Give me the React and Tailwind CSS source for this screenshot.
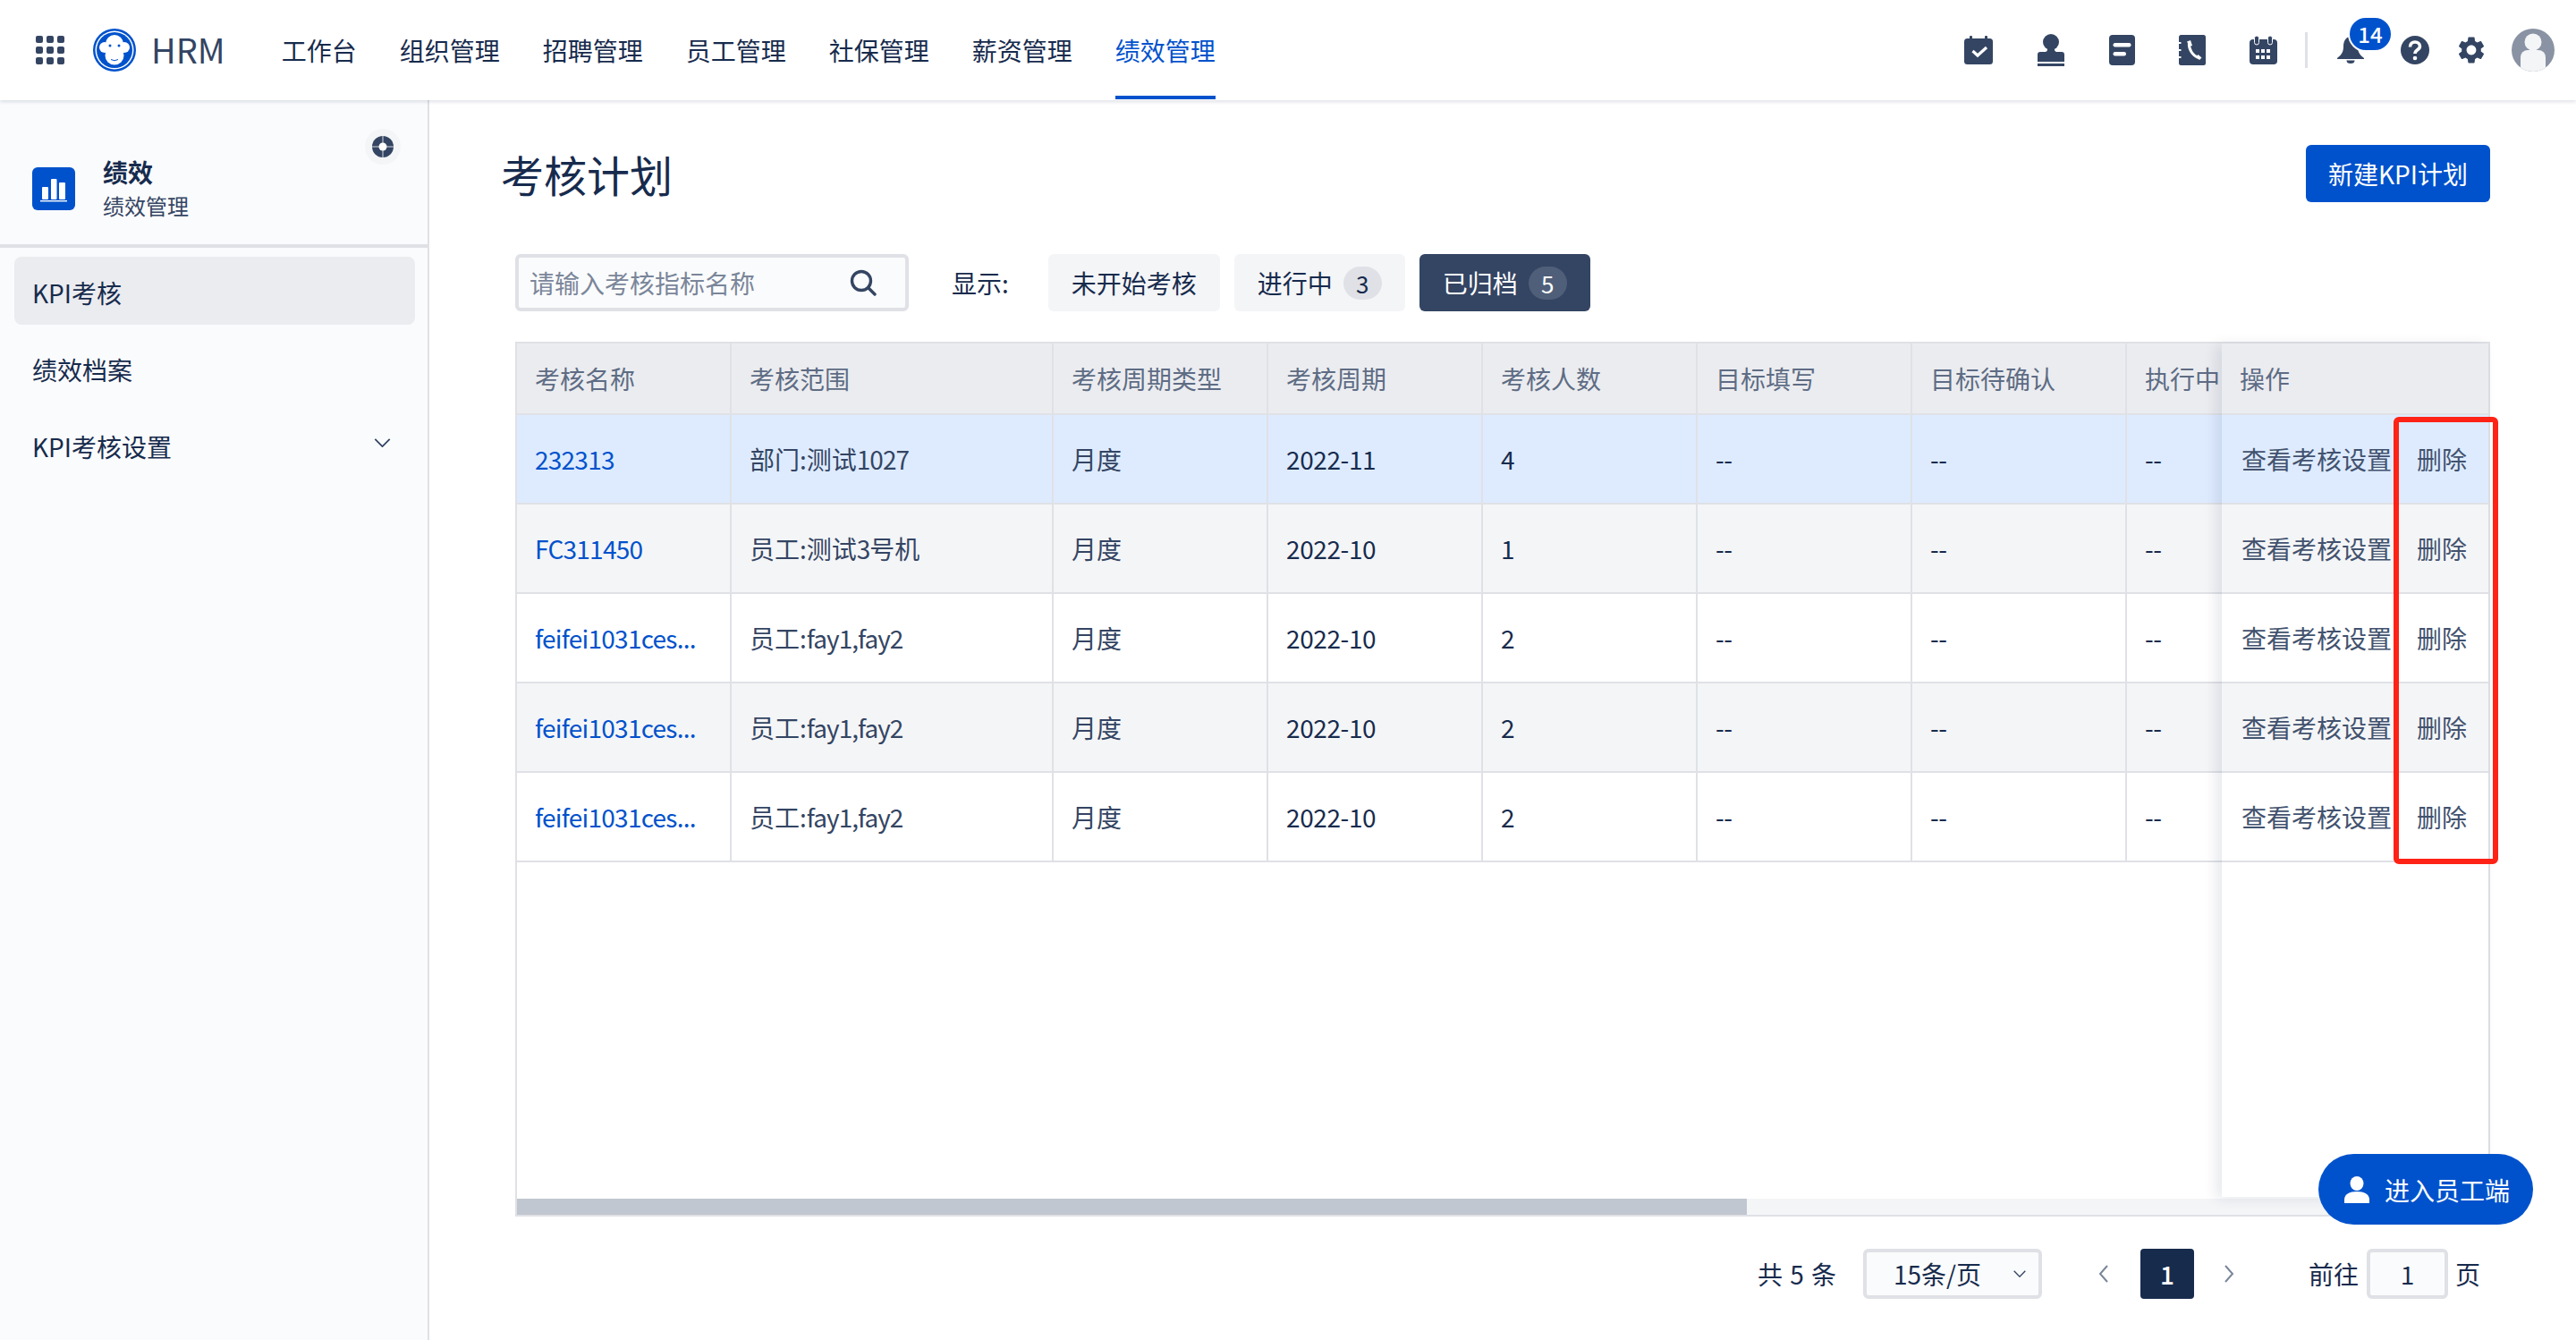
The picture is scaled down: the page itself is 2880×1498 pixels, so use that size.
import { MdSettings } from 'react-icons/md';

const navItems = ['工作台', '组织管理', '招聘管理', '员工管理', '社保管理', '薪资管理', '绩效管理'];

const columns = [
  { key: 'name', title: '考核名称', width: 'w-[240px]' },
  { key: 'scope', title: '考核范围', width: 'w-[360px]' },
  { key: 'type', title: '考核周期类型', width: 'w-[240px]' },
  { key: 'period', title: '考核周期', width: 'w-[240px]' },
  { key: 'count', title: '考核人数', width: 'w-[240px]' },
  { key: 'fill', title: '目标填写', width: 'w-[240px]' },
  { key: 'confirm', title: '目标待确认', width: 'w-[240px]' },
  { key: 'running', title: '执行中', width: 'w-[240px]' },
];

const rows = [
  { name: '232313', scope: '部门:测试1027', type: '月度', period: '2022-11', count: '4', bg: 'bg-[#deebff]' },
  { name: 'FC311450', scope: '员工:测试3号机', type: '月度', period: '2022-10', count: '1', bg: 'bg-[#f4f5f7]' },
  { name: 'feifei1031ces...', scope: '员工:fay1,fay2', type: '月度', period: '2022-10', count: '2', bg: 'bg-white' },
  { name: 'feifei1031ces...', scope: '员工:fay1,fay2', type: '月度', period: '2022-10', count: '2', bg: 'bg-[#f4f5f7]' },
  { name: 'feifei1031ces...', scope: '员工:fay1,fay2', type: '月度', period: '2022-10', count: '2', bg: 'bg-white' },
];

function GridIcon() {
  const dots = [0, 12, 24];
  return (
    <svg width="32" height="32" viewBox="0 0 32 32" fill="#344563">
      {dots.map((y) => dots.map((x) => <rect key={`${x}-${y}`} x={x} y={y} width="8" height="8" rx="2" />))}
    </svg>
  );
}

function Logo() {
  return (
    <svg width="48" height="48" viewBox="0 0 48 48">
      <circle cx="24" cy="24" r="24" fill="#0052cc" />
      <circle cx="24" cy="24" r="21.5" fill="#fff" />
      <circle cx="24" cy="24" r="20" fill="#0052cc" />
      <circle cx="13" cy="21" r="6" fill="#fff" />
      <circle cx="35" cy="21" r="6" fill="#fff" />
      <circle cx="24" cy="17" r="10" fill="#fff" />
      <circle cx="24" cy="30" r="10.5" fill="#fff" />
      <circle cx="19" cy="19" r="1.5" fill="#0052cc" />
      <circle cx="29" cy="19" r="1.5" fill="#0052cc" />
      <path d="M20 34.5 Q24 37 28 34.5" stroke="#0052cc" strokeWidth="1" fill="none" />
    </svg>
  );
}

function CheckCalendarIcon() {
  return (
    <svg width="32" height="32" viewBox="0 0 32 32" fill="#344563">
      <rect x="6" y="0" width="3" height="6" rx="1" />
      <rect x="23" y="0" width="3" height="6" rx="1" />
      <rect x="0" y="3" width="32" height="29" rx="3.5" />
      <path d="M9.5 17 L15 22 L25 13" stroke="#fff" strokeWidth="3.2" fill="none" />
    </svg>
  );
}

function StampIcon() {
  return (
    <svg width="32" height="36" viewBox="0 0 32 36" fill="#344563">
      <circle cx="16" cy="9" r="9" />
      <path d="M1 31 V23 Q1 20 4 20 H10 Q13 19 12 14 H20 Q19 19 22 20 H28 Q31 20 31 23 V31 Z" />
      <rect x="1" y="33" width="30" height="3" />
    </svg>
  );
}

function FormIcon() {
  return (
    <svg width="29" height="34" viewBox="0 0 29 34">
      <rect width="29" height="34" rx="4" fill="#344563" />
      <rect x="4.5" y="9" width="20" height="4.5" rx="2.2" fill="#fff" />
      <rect x="4.5" y="19" width="14.5" height="4.5" rx="2.2" fill="#fff" />
    </svg>
  );
}

function PhoneBookIcon() {
  return (
    <svg width="30" height="34" viewBox="0 0 30 34">
      <rect width="30" height="34" rx="2.5" fill="#344563" />
      <rect x="0" y="8" width="2.5" height="2" fill="#fff" />
      <rect x="0" y="16" width="2.5" height="2" fill="#fff" />
      <rect x="0" y="24" width="2.5" height="2" fill="#fff" />
      <path d="M11.5 8.5 C10.5 15 15 23.5 22.5 25.5" stroke="#fff" strokeWidth="3" fill="none" />
      <path d="M9 7.5 L13 6 L15 12 L12 13 Z M19 25 L21.5 22 L25.5 25.5 L23 28 Z" fill="#fff" />
    </svg>
  );
}

function CalendarIcon() {
  const xs = [7, 13, 19];
  const ys = [15, 22];
  return (
    <svg width="31" height="32" viewBox="0 0 31 32">
      <rect x="0" y="4" width="31" height="28" rx="4" fill="#344563" />
      <rect x="5.5" y="0" width="5" height="10" rx="2.5" fill="#344563" stroke="#fff" strokeWidth="1" />
      <rect x="20.5" y="0" width="5" height="10" rx="2.5" fill="#344563" stroke="#fff" strokeWidth="1" />
      {ys.map((y) => xs.map((x) => <rect key={`${x}-${y}`} x={x} y={y} width="4" height="4" fill="#fff" />))}
    </svg>
  );
}

function BellIcon() {
  return (
    <svg width="30" height="30" viewBox="0 0 30 30" fill="#344563">
      <path d="M15 0 C9 0 7 6 7 11 C7 17 5 20 0 24 V25 H30 V24 C25 20 23 17 23 11 C23 6 21 0 15 0 Z" />
      <path d="M10.5 26.5 H19.5 A4.5 3.5 0 0 1 10.5 26.5 Z" />
    </svg>
  );
}

function HelpIcon() {
  return (
    <svg width="32" height="32" viewBox="0 0 32 32">
      <circle cx="16" cy="16" r="16" fill="#344563" />
      <path d="M10.5 12.5 C10.5 9 13 7 16 7 C19 7 21.5 9 21.5 12 C21.5 15.5 16 15.5 16 20" stroke="#fff" strokeWidth="3.6" fill="none" />
      <circle cx="16" cy="25" r="2.3" fill="#fff" />
    </svg>
  );
}

function AvatarIcon() {
  return (
    <svg width="48" height="48" viewBox="0 0 48 48">
      <clipPath id="avatar-clip">
        <circle cx="24" cy="24" r="24" />
      </clipPath>
      <circle cx="24" cy="24" r="24" fill="#8993a4" />
      <circle cx="24" cy="15" r="9.5" fill="#f4f5f7" />
      <rect x="10" y="24" width="28" height="30" rx="8" fill="#f4f5f7" clipPath="url(#avatar-clip)" />
    </svg>
  );
}

function SearchIcon() {
  return (
    <svg width="30" height="30" viewBox="0 0 30 30" fill="none" stroke="#344563" strokeWidth="3.4">
      <circle cx="13" cy="13" r="10.5" />
      <path d="M21 21 L28 28" strokeLinecap="round" />
    </svg>
  );
}

function Chevron({ className }) {
  return (
    <svg className={className} viewBox="0 0 20 11" fill="none" stroke="currentColor" strokeWidth="2">
      <path d="M1 1 L10 10 L19 1" />
    </svg>
  );
}

// latin runs sit a little tighter than the CJK around them
function Tight({ text, className }) {
  return text.split(/([A-Za-z0-9,.\-]+)/).map((part, i) =>
    i % 2 === 1 ? (
      <span key={i} className={className}>
        {part}
      </span>
    ) : (
      part
    )
  );
}

function Sidebar() {
  return (
    <aside className="w-[480px] shrink-0 bg-[#fafbfc] border-r-2 border-[#dfe1e6]">
      <div className="relative h-[165px] border-b-4 border-[#dfe1e6] flex items-center pl-9 pt-[37px]">
        <div className="w-12 h-12 rounded-md bg-[#0052cc] flex items-center justify-center">
          <svg width="30" height="30" viewBox="0 0 30 30" fill="#fff">
            <rect x="2" y="13" width="7" height="14" rx="1" />
            <rect x="12" y="4" width="6.5" height="23" rx="1" />
            <rect x="21" y="8" width="7" height="19" rx="1" />
            <rect x="0" y="28" width="30" height="1.4" />
          </svg>
        </div>
        <div className="ml-[31px]">
          <div className="text-[28px] leading-[38px] font-bold text-[#172b4d]">绩效</div>
          <div className="text-[24px] leading-[38px] text-[#344563]">绩效管理</div>
        </div>
        <div className="absolute left-[408px] top-[32px] w-10 h-10 rounded-full bg-[#f4f5f7] flex items-center justify-center">
          <svg width="24" height="24" viewBox="0 0 24 24">
            <circle cx="12" cy="12" r="12" fill="#344563" />
            <path d="M12 0 V24 M0 12 H24" stroke="#fff" strokeWidth="0.8" />
            <circle cx="12" cy="12" r="4.5" fill="#fff" />
          </svg>
        </div>
      </div>
      <nav className="pl-4 pr-3.5 pt-2.5 flex flex-col gap-2.5 text-[28px] text-[#172b4d]">
        <div className="h-[76px] pt-1 rounded-lg bg-[#ebecf0] flex items-center pl-[20px]">KPI考核</div>
        <div className="h-[76px] pt-1 rounded-lg flex items-center pl-[20px]">绩效档案</div>
        <div className="h-[76px] pt-1 rounded-lg flex items-center justify-between pl-[20px] pr-[27px]">
          KPI考核设置
          <Chevron className="w-[19px] h-[10px] mb-2 text-[#344563]" />
        </div>
      </nav>
    </aside>
  );
}

function TableRow({ row }) {
  return (
    <div className={`flex h-[100px] border-b-2 border-[#dfe1e6] ${row.bg}`}>
      {columns.map((col) => {
        const value = row[col.key] ?? '--';
        return (
          <div key={col.key} className={`${col.width} shrink-0 h-full flex items-center pl-5 border-r-2 border-[#dfe1e6]`}>
            {col.key === 'name' && <a className="text-[#0052cc] tracking-[-0.75px]">{value}</a>}
            {col.key === 'scope' && (
              <span className="text-[#344563]">
                <Tight text={value} className="tracking-[-1px]" />
              </span>
            )}
            {col.key === 'type' && <span className="text-[#344563]">{value}</span>}
            {col.key !== 'name' && col.key !== 'scope' && col.key !== 'type' && (
              <span className="text-[#172b4d] tracking-[-0.4px]">{value}</span>
            )}
          </div>
        );
      })}
    </div>
  );
}

function PlanTable() {
  return (
    <div className="relative mt-[34px] ml-4 w-[2208px] h-[978px] border-2 border-[#dfe1e6] flex flex-col text-[28px]">
      <div className="flex-1 overflow-hidden">
        <div className="flex h-[80px] bg-[#ebecf0] border-b-2 border-[#dfe1e6] text-[#5e6c84]">
          {columns.map((col) => (
            <div key={col.key} className={`${col.width} shrink-0 h-full flex items-center pl-5 border-r-2 border-[#dfe1e6] whitespace-nowrap`}>
              {col.title}
            </div>
          ))}
        </div>
        {rows.map((row, i) => (
          <TableRow key={i} row={row} />
        ))}
      </div>
      <div className="h-[18px] shrink-0 bg-[#f4f5f7]">
        <div className="h-full w-[1375px] bg-[#c1c7d0]" />
      </div>

      {/* fixed 操作 column */}
      <div className="absolute top-0 right-0 bottom-[20px] w-[298px] bg-white shadow-[-6px_2px_14px_rgba(9,30,66,0.1)]">
        <div className="h-[80px] bg-[#ebecf0] border-b-2 border-[#dfe1e6] flex items-center pl-5 text-[#5e6c84]">操作</div>
        {rows.map((row, i) => (
          <div key={i} className={`h-[100px] border-b-2 border-[#dfe1e6] flex items-center pl-[22px] text-[#42526e] ${row.bg}`}>
            <span>查看考核设置</span>
            <span className="ml-7">删除</span>
          </div>
        ))}
      </div>

      {/* red annotation */}
      <div className="absolute left-[2098px] top-[82px] w-[117px] h-[500px] border-[6px] border-[#ff2216] rounded-md" />
    </div>
  );
}

function Pagination() {
  return (
    <div className="mt-9 h-14 pr-[11px] flex items-center justify-end text-[28px] text-[#172b4d]">
      <span className="[word-spacing:2px]">共 5 条</span>
      <div className="ml-[30px] w-[200px] h-14 border-4 border-[#dfe1e6] rounded-md bg-[#fafbfc] flex items-center pl-[30px] pr-3.5">
        <span className="flex-1">15条/页</span>
        <Chevron className="w-[14px] h-[8px] text-[#344563]" />
      </div>
      <svg className="ml-[62px]" width="13" height="24" viewBox="0 0 13 24" fill="none" stroke="#7a869a" strokeWidth="2">
        <path d="M11 3 L3 12 L11 21" />
      </svg>
      <div className="ml-[35px] w-[60px] h-14 rounded bg-[#172b4d] text-white font-medium flex items-center justify-center">1</div>
      <svg className="ml-[33px]" width="13" height="24" viewBox="0 0 13 24" fill="none" stroke="#7a869a" strokeWidth="2">
        <path d="M2 3 L10 12 L2 21" />
      </svg>
      <span className="ml-[82px]">前往</span>
      <div className="ml-[9px] w-[91px] h-14 border-4 border-[#dfe1e6] rounded-md bg-[#fafbfc] flex items-center justify-center">1</div>
      <span className="ml-2">页</span>
    </div>
  );
}

export default function App() {
  return (
    <div className="relative h-[1498px] overflow-hidden bg-white flex flex-col font-['Noto_Sans_CJK_SC','Noto_Sans',sans-serif]">
      <header className="relative z-10 h-[112px] shrink-0 bg-white shadow-[0_2px_4px_rgba(9,30,66,0.13)] flex items-center pl-10 pr-6">
        <GridIcon />
        <div className="ml-[32px]">
          <Logo />
        </div>
        <span className="ml-[17px] mb-1 text-[38px] text-[#344563]">HRM</span>
        <nav className="ml-[63px] flex gap-12 text-[28px] text-[#172b4d] self-start">
          {navItems.map((item) => (
            <div
              key={item}
              className={
                item === '绩效管理'
                  ? 'h-[111px] pt-1 flex items-center border-b-4 border-[#0052cc] text-[#0052cc]'
                  : 'h-[111px] pt-1 flex items-center border-b-4 border-transparent'
              }
            >
              {item}
            </div>
          ))}
        </nav>
        <div className="ml-auto flex items-center">
          <div className="flex items-center gap-[49px]">
            <CheckCalendarIcon />
            <StampIcon />
            <FormIcon />
            <PhoneBookIcon />
            <CalendarIcon />
          </div>
          <div className="ml-[31px] w-[3px] h-10 bg-[#dfe1e6]" />
          <div className="relative ml-[33px]">
            <BellIcon />
            <span className="absolute left-[12px] top-[-23px] w-[50px] h-10 rounded-full bg-[#0052cc] border-2 border-white text-white text-[24px] font-medium flex items-center justify-center">
              14
            </span>
          </div>
          <div className="ml-[41px]">
            <HelpIcon />
          </div>
          <MdSettings className="ml-[29px] text-[#344563]" size={36} />
          <div className="ml-[27px]">
            <AvatarIcon />
          </div>
        </div>
      </header>

      <div className="flex flex-1 min-h-0">
        <Sidebar />
        <main className="flex-1 pl-20 pr-24 pt-[50px]">
          <div className="h-16 flex items-center justify-between">
            <h1 className="text-[48px] text-[#172b4d]">考核计划</h1>
            <button className="w-[206px] h-16 rounded-md bg-[#0052cc] text-white text-[28px]">新建KPI计划</button>
          </div>

          <div className="mt-[58px] ml-4 h-16 flex items-center text-[28px] text-[#172b4d]">
            <div className="w-[440px] h-16 border-4 border-[#dfe1e6] rounded-md bg-[#fafbfc] flex items-center justify-between pl-3 pr-8">
              <span className="text-[#7a869a]">请输入考核指标名称</span>
              <SearchIcon />
            </div>
            <span className="ml-12">显示:</span>
            <div className="ml-[44px] w-[192px] h-16 rounded-md bg-[#f4f5f7] flex items-center justify-center">未开始考核</div>
            <div className="ml-4 w-[191px] h-16 rounded-md bg-[#f4f5f7] flex items-center pl-[26px]">
              进行中
              <span className="ml-3 w-[43px] h-[37px] rounded-full bg-[#dfe1e6] text-[26px] flex items-center justify-center">3</span>
            </div>
            <div className="ml-4 w-[191px] h-16 rounded-md bg-[#344563] text-white flex items-center pl-[26px]">
              已归档
              <span className="ml-3 w-[43px] h-[37px] rounded-full bg-[#505f79] text-[26px] flex items-center justify-center">5</span>
            </div>
          </div>

          <PlanTable />
          <Pagination />
        </main>
      </div>

      {/* floating entry button */}
      <button className="absolute z-20 right-[48px] bottom-[129px] w-[240px] h-[79px] rounded-full bg-[#0052cc] text-white text-[28px] flex items-center pl-[29px]">
        <svg width="28" height="30" viewBox="0 0 28 30" fill="#fff">
          <ellipse cx="14" cy="8" rx="7.5" ry="8" />
          <path d="M0 30 V26 C0 20 6 17 14 17 C22 17 28 20 28 26 V30 Z" />
        </svg>
        <span className="ml-[17px]">进入员工端</span>
      </button>
    </div>
  );
}
